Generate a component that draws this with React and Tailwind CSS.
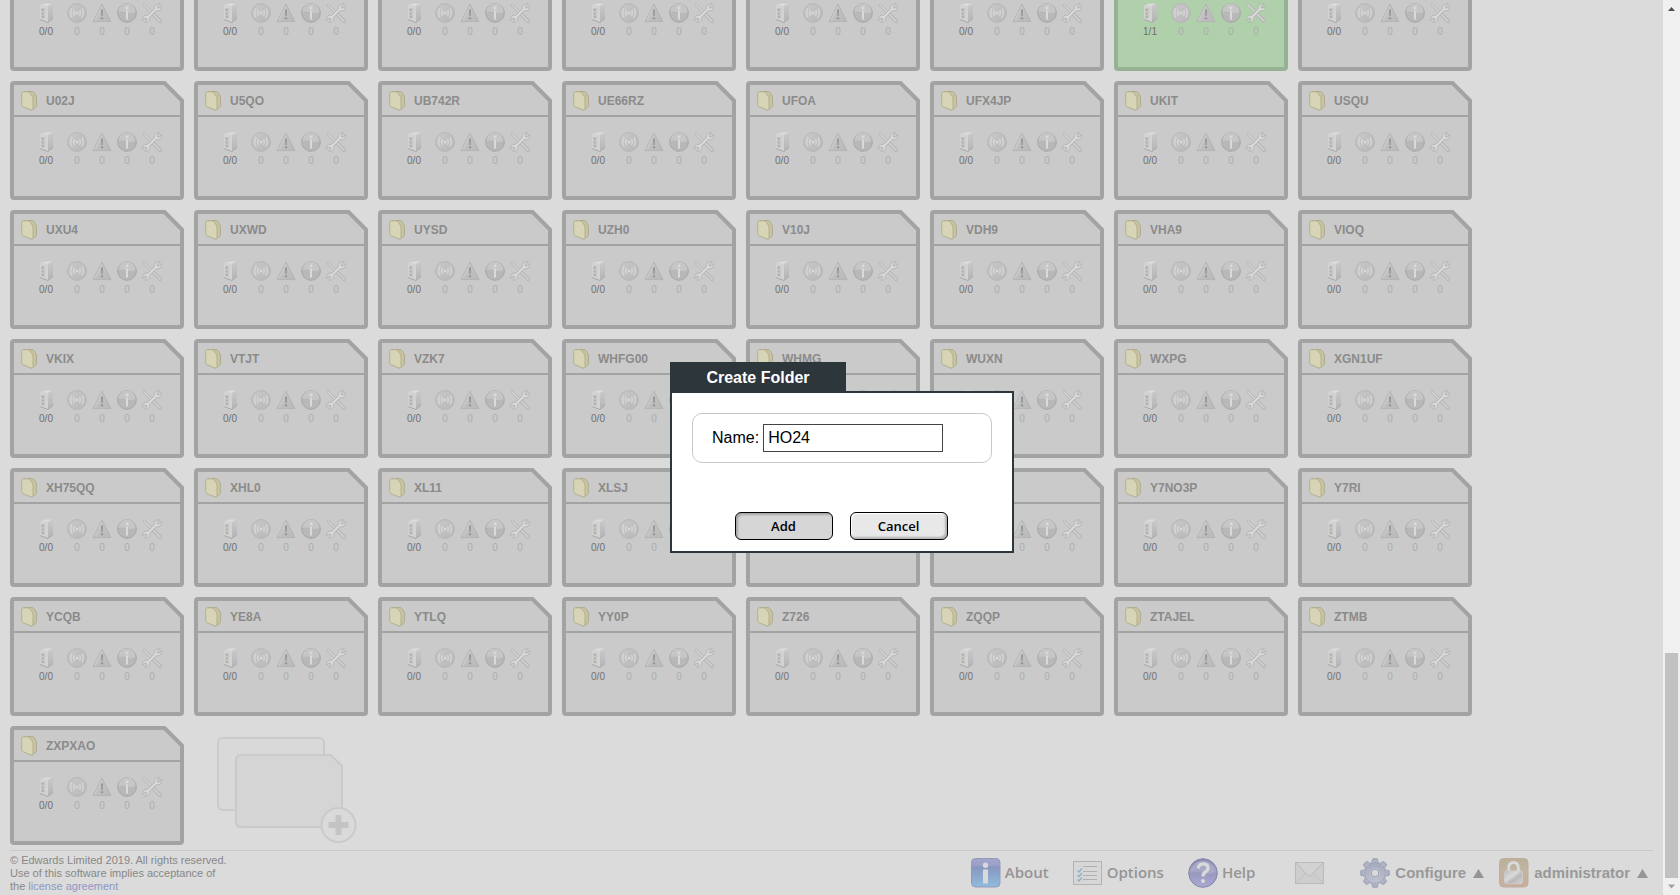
import React from 'react';

const ROWS = [
  ['', '', '', '', '', '', '', ''],
  ['U02J', 'U5QO', 'UB742R', 'UE66RZ', 'UFOA', 'UFX4JP', 'UKIT', 'USQU'],
  ['UXU4', 'UXWD', 'UYSD', 'UZH0', 'V10J', 'VDH9', 'VHA9', 'VIOQ'],
  ['VKIX', 'VTJT', 'VZK7', 'WHFG00', 'WHMG', 'WUXN', 'WXPG', 'XGN1UF'],
  ['XH75QQ', 'XHL0', 'XL11', 'XLSJ', '', '', 'Y7NO3P', 'Y7RI'],
  ['YCQB', 'YE8A', 'YTLQ', 'YY0P', 'Z726', 'ZQQP', 'ZTAJEL', 'ZTMB'],
  ['ZXPXAO'],
];

const FOLDERS = ROWS.flatMap((row, r) =>
  row.map((name, c) => ({ id: `${r}-${c}`, name, active: r === 0 && c === 6 })),
);

function Gradients() {
  return (
    <svg width="0" height="0" className="absolute" aria-hidden="true">
      <defs>
        <linearGradient id="disc" x1="0" y1="0" x2="1" y2="1">
          <stop offset="0" stopColor="#c8c8c8" />
          <stop offset="1" stopColor="#b8b8b8" />
        </linearGradient>
        <linearGradient id="side" x1="0" y1="0" x2="0" y2="1">
          <stop offset="0" stopColor="#c9c9c9" />
          <stop offset="1" stopColor="#b4b4b4" />
        </linearGradient>
        <linearGradient id="about" x1="0" y1="0" x2="0" y2="1">
          <stop offset="0" stopColor="#a3a5cc" />
          <stop offset="0.25" stopColor="#9b9fc8" />
          <stop offset="0.3" stopColor="#8796bf" />
          <stop offset="1" stopColor="#8fbcdc" />
        </linearGradient>
        <linearGradient id="help" x1="0" y1="0" x2="0" y2="1">
          <stop offset="0" stopColor="#8a8ab2" />
          <stop offset="0.45" stopColor="#a2a2c4" />
          <stop offset="0.5" stopColor="#9898bf" />
          <stop offset="1" stopColor="#a9a9d2" />
        </linearGradient>
        <linearGradient id="gear" x1="0" y1="0" x2="0" y2="1">
          <stop offset="0" stopColor="#a3abbf" />
          <stop offset="0.5" stopColor="#b1b4c7" />
          <stop offset="1" stopColor="#c0c1d2" />
        </linearGradient>
        <linearGradient id="lock" x1="0" y1="0" x2="0" y2="1">
          <stop offset="0" stopColor="#bab09a" />
          <stop offset="0.4" stopColor="#c1b5a2" />
          <stop offset="1" stopColor="#c9ad9d" />
        </linearGradient>
        <linearGradient id="steel" x1="0" y1="0" x2="1" y2="1">
          <stop offset="0" stopColor="#bdbdbd" />
          <stop offset="0.4" stopColor="#dadada" />
          <stop offset="0.6" stopColor="#b8b8b8" />
          <stop offset="1" stopColor="#d6d6d6" />
        </linearGradient>
      </defs>
    </svg>
  );
}

const FolderIcon = () => (
  <svg width="16" height="20" viewBox="0 0 16 20">
    <path d="M3 .5h8q1.500 0 2.500 1.500l1.500 3q.5 1 .5 2v7.500q0 1-1 2l-4 2.700Z" fill="#c8c3a0" stroke="#b0ac90" />
    <path d="M.7 2.500Q.7.800 2.400.800H6.500Q8 .800 9 2l2.200 3q.8 1 .8 2.300V17.500q0 2-2 1.500L2.200 15.800Q.7 15 .7 13.400Z" fill="#d7d5b5" stroke="#b4b092" />
  </svg>
);

const ServerIcon = () => (
  <svg width="20" height="20" viewBox="0 0 20 20">
    <path d="M12 19 18.500 14.500 14 13Z" fill="#c0c0c0" />
    <path d="M4 2.500 9 .500h7.500L12 3Z" fill="#dcdcdc" />
    <path d="M4 2.300 12 3v16l-8-3Z" fill="#d2d2d2" />
    <path d="M12 3 17 1v14L12 19Z" fill="url(#side)" />
    <path d="M4 16.500l8 3 5-4" fill="none" stroke="#a9a9a9" />
    <path d="M5 5h4v11l-4-1.500Z" fill="#c6c6c6" />
    <circle cx="6.700" cy="6.700" r="1" fill="#b7a3a3" />
    <circle cx="6.700" cy="10.400" r="1" fill="#b5ae99" />
    <circle cx="6.700" cy="14" r="1" fill="#9ab09a" />
  </svg>
);

const AlarmIcon = () => (
  <svg width="20" height="20" viewBox="0 0 20 20" fill="none" stroke="#d5d5d5" strokeWidth="1.500">
    <circle cx="10" cy="10" r="9.400" fill="url(#disc)" stroke="#b6b6b6" strokeWidth="1" />
    <circle cx="10" cy="10" r="1.500" fill="#d8d8d8" stroke="none" />
    <path d="M7.500 7.200Q5.800 10 7.500 12.800M12.500 7.200Q14.200 10 12.500 12.800M5 5.500Q2.300 10 5 14.500M15 5.500Q17.700 10 15 14.500" />
  </svg>
);

const WarningIcon = () => (
  <svg width="20" height="20" viewBox="0 0 20 20">
    <path d="M10 1.200 19 18.600H1Z" fill="url(#disc)" stroke="#b4b4b4" strokeLinejoin="round" />
    <path d="M10 3.500 3 17" stroke="#cfcfcf" fill="none" />
    <path d="M8.900 6.500h2.200l-.4 6.500h-1.400Z" fill="#989898" />
    <circle cx="10" cy="15.300" r="1.200" fill="#989898" />
  </svg>
);

const InfoIcon = () => (
  <svg width="20" height="20" viewBox="0 0 20 20">
    <circle cx="10" cy="10" r="9.300" fill="#b8b8b8" stroke="#a6a6a6" />
    <path d="M1.500 9A8.500 8.500 0 0 1 18.500 9Q14 11 10 9.500 6 8 1.500 9Z" fill="#c6c6c6" />
    <circle cx="10" cy="4.700" r="1.500" fill="#dadada" />
    <path d="M9 7.500h2V16.500H9Z" fill="#dadada" />
  </svg>
);

const ToolsIcon = () => (
  <svg width="20" height="20" viewBox="0 0 20 20" fill="none" strokeLinecap="round" strokeLinejoin="round">
    <path d="M2 2 10 10" stroke="#b0b0b0" strokeWidth="2.500" />
    <path d="M2 2 10 10" stroke="#d8d8d8" strokeWidth="1.200" />
    <path d="M11 11 18 18" stroke="#b0b0b0" strokeWidth="3.600" />
    <path d="M11 11 18 18" stroke="#cecece" strokeWidth="2" />
    <path
      d="M17.500.9 15 3.400l.3 1.500 1.600.3L19.300 2.700Q20 5.500 18 7.200 16.300 8.300 14.300 7.600L7.600 14.300Q8.300 16.500 6.900 18 5.200 19.700 2.700 19.200L5 16.900l-.3-1.600L3.100 15 .8 17.300Q.2 14.700 2 13 3.600 11.700 5.700 12.400L12.400 5.700Q11.700 3.600 13.100 2 15 .300 17.500.9Z"
      fill="#dadada"
      stroke="#aeaeae"
      strokeWidth=".8"
    />
  </svg>
);

const COUNTERS = [AlarmIcon, WarningIcon, InfoIcon, ToolsIcon];

function FolderCard({ name, active }) {
  const line = active ? '#97b194' : '#a3a3a3';
  return (
    <article className="relative h-[119px] w-[174px]">
      <svg className="absolute inset-0" width="174" height="119" viewBox="0 0 174 119" aria-hidden="true">
        <path
          d="M4 2H154.500L172 19.500V115Q172 117 170 117H4Q2 117 2 115V4Q2 2 4 2Z"
          fill={active ? '#b0cfab' : '#cacaca'}
          stroke={line}
          strokeWidth="4"
        />
        <path d="M3 35H171" stroke={line} strokeWidth="2" />
      </svg>
      <div className="relative flex h-full flex-col">
        <header className="flex h-9 items-center gap-[9px] pl-[11px] pt-1">
          <FolderIcon />
          <h2 className="text-[12px] font-bold leading-4 text-[#8b8b8b]">{name}</h2>
        </header>
        <div className="flex pl-[21px] pt-[15px] text-[10px] leading-[14px]">
          <div className="flex w-[30px] flex-col items-center gap-0.5 text-[#707070]">
            <ServerIcon />
            <span>{active ? '1/1' : '0/0'}</span>
          </div>
          <div className="flex gap-[5px] pl-1.5 text-[#adadad]">
            {COUNTERS.map((Icon, i) => (
              <div key={i} className="flex w-5 flex-col items-center gap-0.5">
                <Icon />
                <span>0</span>
              </div>
            ))}
          </div>
        </div>
      </div>
    </article>
  );
}

const NewFolderButton = () => (
  <button type="button" aria-label="Create folder" className="ml-[23px] mt-[11px] h-[108px]">
    <svg width="142" height="108" viewBox="0 0 142 108">
      <g fill="#d5d5d5" stroke="#cacaca" strokeWidth="2">
        <rect x="1" y="1" width="106" height="72" rx="5" fill="#d9d9d9" />
        <path d="M24 18H114L125 29V90H24Q19 90 19 85V23Q19 18 24 18Z" />
        <circle cx="121.500" cy="88" r="17" fill="#dadada" />
      </g>
      <path d="M121.500 78V98M111.500 88H131.500" stroke="#c4c4c4" strokeWidth="6" />
    </svg>
  </button>
);

const AboutIcon = () => (
  <svg width="30" height="30" viewBox="0 0 30 30">
    <rect x=".5" y=".5" width="28.500" height="28.500" rx="4" fill="url(#about)" stroke="#939bbb" />
    <circle cx="14.500" cy="7.300" r="2.700" fill="#d9d9d9" />
    <rect x="12" y="11.500" width="5" height="14" rx=".5" fill="#d9d9d9" />
  </svg>
);

const OptionsIcon = () => (
  <svg width="30" height="24" viewBox="0 0 30 24" fill="none">
    <rect x=".5" y=".5" width="28" height="23" fill="#d7d7d7" stroke="#b2b2b2" />
    <path d="M10 5.500H24M10 10.500H24M10 14.500H24M10 18.500H24" stroke="#b0b0b0" />
    <path d="M4.500 9.500l1.500 1.500 3-3.500M4.500 14l1.500 1.500 3-3.500M4.500 18.500l1.500 1.500 3-3.500" stroke="#91b1c8" strokeWidth="1.500" />
  </svg>
);

const HelpIcon = () => (
  <svg width="30" height="30" viewBox="0 0 30 30" fill="none">
    <circle cx="15" cy="15" r="14.300" fill="url(#help)" stroke="#8585ab" />
    <path d="M2.500 14A12.600 12.600 0 0 1 27.500 14Q21 18 15 14 9 10.500 2.500 14Z" fill="#a8a8c7" />
    <path d="M10.300 10.500Q10.700 5.800 15.300 5.800 20 5.900 20 10 20 12.500 17.300 14 15 15.300 15 18.500" stroke="#dadada" strokeWidth="3.200" />
    <circle cx="15" cy="23" r="2.100" fill="#dadada" />
  </svg>
);

const MailIcon = () => (
  <svg width="30" height="22" viewBox="0 0 30 22" fill="none" stroke="#bababa">
    <rect x=".5" y=".5" width="28" height="21" fill="#cecece" />
    <path d="M1 21 11.500 10.500M28 21 17.500 10.500" stroke="#c0c0c0" />
    <path d="M1 1 13 13.500Q14.500 14.800 16 13.500L28 1" fill="#d2d2d2" />
  </svg>
);

const GearIcon = () => (
  <svg width="30" height="30" viewBox="-15 -15 30 30">
    <g fill="url(#gear)" stroke="#999dad" strokeWidth=".8">
      {[0, 45, 90, 135, 180, 225, 270, 315].map((a) => (
        <path key={a} d="M-3.800-9 -2.200-14.300H2.200L3.800-9Z" transform={`rotate(${a})`} />
      ))}
      <circle r="10.300" />
    </g>
    <circle r="9.800" fill="url(#gear)" />
    <circle r="5" fill="#c4c6d2" />
    <circle r="3.800" fill="#dbdbdb" stroke="#9a9ead" />
  </svg>
);

const LockIcon = () => (
  <svg width="30" height="30" viewBox="0 0 30 30" fill="none">
    <rect x=".5" y=".5" width="28.500" height="28.500" rx="4" fill="url(#lock)" stroke="#bfae9c" />
    <path d="M9.700 14V10Q9.700 4.500 14.500 4.500T19.300 10V14" stroke="#dadada" strokeWidth="2.800" />
    <rect x="5.500" y="12.800" width="18" height="13" rx="2" fill="url(#steel)" stroke="#cfcfcf" strokeWidth=".7" />
  </svg>
);

const Caret = () => (
  <svg width="11" height="9" viewBox="0 0 11 9">
    <path d="M5.500 0 11 9H0Z" fill="#959595" />
  </svg>
);

function NavLink({ href, icon, children }) {
  return (
    <a
      href={href}
      className='flex items-center gap-1 font-["Open_Sans",sans-serif] text-[15px] font-semibold leading-5 text-[#959595]'
    >
      {icon}
      <span className="pb-0.5">{children}</span>
    </a>
  );
}

const MENU = 'flex items-center gap-[5px] text-[15px] font-bold leading-5 text-[#999999]';

function Footer() {
  return (
    <footer className="mx-2.5 flex h-[45px] shrink-0 items-start border-t border-[#c9c9c9]">
      <p className="pt-[3px] text-[11px] leading-[13px] text-[#888888]">
        © Edwards Limited 2019. All rights reserved.
        <br />
        Use of this software implies acceptance of
        <br />
        the <a href="#license" className="text-[#8f97c4]">license agreement</a>
      </p>
      <nav className="ml-auto flex h-11 items-center pr-[5px]">
        <div className="flex items-center gap-6">
          <NavLink href="#about" icon={<AboutIcon />}>About</NavLink>
          <NavLink href="#options" icon={<OptionsIcon />}>Options</NavLink>
          <NavLink href="#help" icon={<HelpIcon />}>Help</NavLink>
        </div>
        <a href="#messages" aria-label="Messages" className="ml-10"><MailIcon /></a>
        <button type="button" className={`${MENU} ml-[35px]`}><GearIcon />Configure<span className="pl-0.5"><Caret /></span></button>
        <button type="button" className={`${MENU} ml-[15px]`}><LockIcon />administrator<span className="pl-0.5"><Caret /></span></button>
      </nav>
    </footer>
  );
}

function ScrollTrack() {
  return (
    <div className="flex w-[17px] shrink-0 flex-col items-center bg-[#f0f0f0]" aria-hidden="true">
      <svg width="17" height="17" viewBox="0 0 17 17"><path d="M8.500 7 12 11H5Z" fill="#505050" /></svg>
      <div className="w-[13px] grow" />
      <div className="h-[225px] w-[13px] bg-[#c1c1c1]" />
      <svg width="17" height="17" viewBox="0 0 17 17"><path d="M8.500 10.500 12 6.500H5Z" fill="#a0a0a0" /></svg>
    </div>
  );
}

const BUTTON =
  'h-7 w-[98px] rounded-md border border-black font-["Open_Sans",sans-serif] text-[13px] font-semibold leading-5 text-black';

function CreateFolderDialog() {
  return (
    <div className="absolute inset-0 flex items-center justify-center pl-1 pt-5">
      <form role="dialog" aria-labelledby="dialog-title" className="w-[344px]" onSubmit={(e) => e.preventDefault()}>
        <h1 id="dialog-title" className="h-[29px] w-44 bg-[#2d363b] text-center text-base font-bold leading-8 text-white">
          Create Folder
        </h1>
        <div className="border-2 border-[#2d363b] bg-white px-5 pb-[11px] pt-5">
          <div className="flex h-[50px] items-center gap-1 rounded-[10px] border border-[#c8c8c8] pl-[19px] text-base leading-5 text-black">
            <label htmlFor="folder-name">Name:</label>
            <input
              id="folder-name"
              type="text"
              defaultValue="HO24"
              className="h-7 w-[180px] border border-[#444444] bg-white px-1 text-base outline-none"
            />
          </div>
          <div className="mt-[49px] flex justify-center gap-[17px] pr-0.5">
            <button type="submit" className={`${BUTTON} bg-[#d6d6d6] shadow-[inset_2px_2px_2px_#a8a8a8]`}>Add</button>
            <button type="button" className={`${BUTTON} bg-[#e8e8e8] shadow-[inset_-2px_-2px_2px_#b4b4b4,inset_1px_1px_1px_#ffffff]`}>Cancel</button>
          </div>
        </div>
      </form>
    </div>
  );
}

export default function App() {
  return (
    <div className='relative flex h-screen overflow-hidden bg-[#dbdbdb] font-["Liberation_Sans",Arial,sans-serif]'>
      <Gradients />
      <div className="flex min-w-0 grow flex-col justify-end overflow-hidden">
        <main className="flex shrink-0 flex-wrap gap-2.5 px-2.5 pb-[5px]">
          {FOLDERS.map((f) => (
            <FolderCard key={f.id} name={f.name} active={f.active} />
          ))}
          <NewFolderButton />
        </main>
        <Footer />
      </div>
      <ScrollTrack />
      <CreateFolderDialog />
    </div>
  );
}
